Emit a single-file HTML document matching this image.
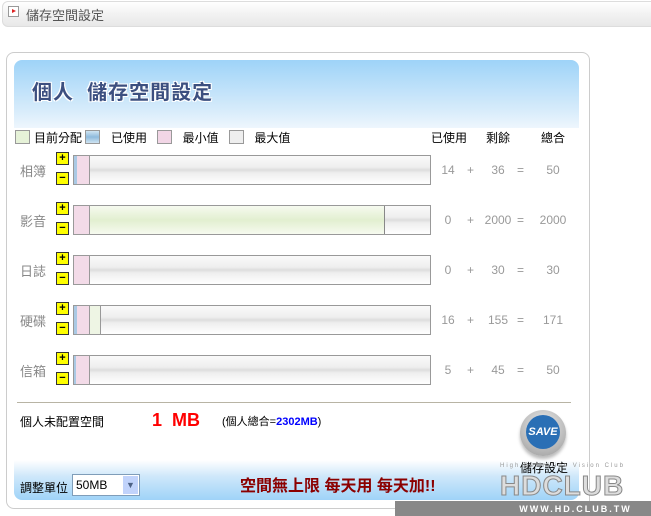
<!DOCTYPE html><html><head><meta charset="utf-8"><style>
body{margin:0;width:651px;height:516px;background:#fff;font-family:"Liberation Sans","Noto Sans CJK TC",sans-serif;position:relative;overflow:hidden;font-size:12px}
.a{position:absolute}
.top{left:2px;top:1px;width:660px;height:24px;border:1px solid #ddd;border-radius:6px;background:linear-gradient(#fff,#f2f2f2 50%,#e8e8e8);}
.bar{position:absolute;left:73px;width:356px;height:28px;border:1px solid #999;background:linear-gradient(#fafafa,#eee 40%,#ddd 50%,#eee 60%,#fff)}
.pl{position:absolute;width:11px;height:11px;background:#ff0;border:1px solid #333;font:bold 11px/10px "Liberation Sans";text-align:center;color:#000}
.n{position:absolute;color:#999;font-size:12px;text-align:center}
.lb{position:absolute;left:20px;color:#888;font-size:13px}
.sw{display:inline-block;width:13px;height:12px;border:1px solid #999;vertical-align:-2px;margin-right:4px}
</style></head><body>
<div class="a top"></div>
<div class="a" style="left:8px;top:6px;width:9px;height:9px;border:1px solid #999;background:#fff"><div style="margin:2px 0 0 3px;width:0;height:0;border-left:4px solid #d22;border-top:2.5px solid transparent;border-bottom:2.5px solid transparent"></div></div>
<div class="a" style="left:26px;top:5px;font-size:13px;color:#555">儲存空間設定</div>
<div class="a" style="left:6px;top:52px;width:582px;height:455px;border:1px solid #ccc;border-radius:8px"></div>
<div class="a" style="left:14px;top:60px;width:565px;height:68px;border-radius:8px 8px 0 0;background:linear-gradient(#9ed3f8,#d8ecfb 75%,#eef6fd)"></div>
<div class="a" style="left:32px;top:76px;font-size:20px;font-weight:bold;color:#3c4f80;text-shadow:1px 1px 0 #fff,-1px -1px 0 #fff,1px -1px 0 #fff,-1px 1px 0 #fff;letter-spacing:1px">個人&nbsp; 儲存空間設定</div>
<div class="a" style="left:15px;top:129px;font-size:12px;color:#000"><span class="sw" style="background:#e6f2d8"></span>目前分配 <span class="sw" style="background:linear-gradient(#cfe4f2,#8fbbdd 50%,#cfe4f2)"></span>&nbsp; 已使用 &nbsp;&nbsp;<span class="sw" style="background:#f2d6e6"></span>&nbsp; 最小值 &nbsp;&nbsp;<span class="sw" style="background:#eee"></span>&nbsp; 最大值</div>
<div class="a" style="left:431px;top:129px">已使用</div><div class="a" style="left:486px;top:129px">剩餘</div><div class="a" style="left:541px;top:129px">總合</div>

<div class="lb" style="top:161px">相簿</div><div class="pl" style="left:56px;top:152px">+</div><div class="pl" style="left:56px;top:172px">−</div>
<div class="bar" style="top:155px"><div class="a" style="left:0;width:3px;height:28px;background:#aac9e4"></div><div class="a" style="left:3px;width:12px;height:28px;background:#f3dbe8;border-right:1px solid #999"></div></div>
<div class="n" style="left:436px;top:163px;width:24px">14</div><div class="n" style="left:467px;top:163px">+</div><div class="n" style="left:486px;top:163px;width:24px">36</div><div class="n" style="left:517px;top:163px">=</div><div class="n" style="left:538px;top:163px;width:30px">50</div>

<div class="lb" style="top:211px">影音</div><div class="pl" style="left:56px;top:202px">+</div><div class="pl" style="left:56px;top:222px">−</div>
<div class="bar" style="top:205px"><div class="a" style="left:0;width:310px;height:28px;background:linear-gradient(#f6faef,#e2efd0 50%,#f6faef);border-right:1px solid #888"></div><div class="a" style="left:0;width:15px;height:28px;background:#f3dbe8;border-right:1px solid #999"></div></div>
<div class="n" style="left:436px;top:213px;width:24px">0</div><div class="n" style="left:467px;top:213px">+</div><div class="n" style="left:482px;top:213px;width:32px">2000</div><div class="n" style="left:517px;top:213px">=</div><div class="n" style="left:536px;top:213px;width:34px">2000</div>

<div class="lb" style="top:261px">日誌</div><div class="pl" style="left:56px;top:252px">+</div><div class="pl" style="left:56px;top:272px">−</div>
<div class="bar" style="top:255px"><div class="a" style="left:0;width:15px;height:28px;background:#f3dbe8;border-right:1px solid #999"></div></div>
<div class="n" style="left:436px;top:263px;width:24px">0</div><div class="n" style="left:467px;top:263px">+</div><div class="n" style="left:486px;top:263px;width:24px">30</div><div class="n" style="left:517px;top:263px">=</div><div class="n" style="left:538px;top:263px;width:30px">30</div>

<div class="lb" style="top:311px">硬碟</div><div class="pl" style="left:56px;top:302px">+</div><div class="pl" style="left:56px;top:322px">−</div>
<div class="bar" style="top:305px"><div class="a" style="left:0;width:26px;height:28px;background:#eef5e4;border-right:1px solid #999"></div><div class="a" style="left:0;width:3px;height:28px;background:#aac9e4"></div><div class="a" style="left:3px;width:12px;height:28px;background:#f3dbe8;border-right:1px solid #999"></div></div>
<div class="n" style="left:436px;top:313px;width:24px">16</div><div class="n" style="left:467px;top:313px">+</div><div class="n" style="left:484px;top:313px;width:28px">155</div><div class="n" style="left:517px;top:313px">=</div><div class="n" style="left:538px;top:313px;width:30px">171</div>

<div class="lb" style="top:361px">信箱</div><div class="pl" style="left:56px;top:352px">+</div><div class="pl" style="left:56px;top:372px">−</div>
<div class="bar" style="top:355px"><div class="a" style="left:0;width:2px;height:28px;background:#aac9e4"></div><div class="a" style="left:2px;width:13px;height:28px;background:#f3dbe8;border-right:1px solid #999"></div></div>
<div class="n" style="left:436px;top:363px;width:24px">5</div><div class="n" style="left:467px;top:363px">+</div><div class="n" style="left:486px;top:363px;width:24px">45</div><div class="n" style="left:517px;top:363px">=</div><div class="n" style="left:538px;top:363px;width:30px">50</div>

<div class="a" style="left:17px;top:402px;width:554px;height:1px;background:#b8b4a4"></div>
<div class="a" style="left:20px;top:413px">個人未配置空間</div>
<div class="a" style="left:152px;top:410px;color:#f00;font-weight:bold;font-size:18px">1&nbsp; MB</div>
<div class="a" style="left:222px;top:413px;font-size:11px">(個人總合=<b style="color:#00f">2302MB</b>)</div>
<div class="a" style="left:14px;top:460px;width:565px;height:40px;border-radius:0 0 8px 8px;background:linear-gradient(#fff,#cfe8fa 40%,#9fd3f8)"></div>
<div class="a" style="left:520px;top:410px;width:46px;height:46px;border-radius:50%;background:radial-gradient(circle at 50% 35%,#eee,#999);box-shadow:0 3px 3px #bbb"></div>
<div class="a" style="left:526px;top:415px;width:34px;height:34px;border-radius:50%;background:#2a6fb5;color:#fff;font:bold italic 11px/34px 'Liberation Sans';text-align:center">SAVE</div>
<div class="a" style="left:520px;top:459px;font-size:12px">儲存設定</div>
<div class="a" style="left:20px;top:479px">調整單位</div>
<div class="a" style="left:72px;top:474px;width:66px;height:20px;border:1px solid #7f9db9;background:#fff;font-size:12px;line-height:20px;text-indent:3px">50MB<div class="a" style="right:1px;top:1px;width:15px;height:18px;background:#c1d3fb;color:#4d6185;font-size:9px;text-align:center;line-height:18px;text-indent:0">▼</div></div>
<div class="a" style="left:240px;top:472px;color:#8b0000;font-weight:bold;font-size:16px">空間無上限 每天用 每天加!!</div>
<div class="a" style="left:500px;top:463px;font-size:6px;color:#999;letter-spacing:2px">High Definition Vision Club</div>
<div class="a" style="left:500px;top:472px;font:bold 28px/28px 'Liberation Sans';color:#ddd;-webkit-text-stroke:1px #888;letter-spacing:1px">HDCLUB</div>
<div class="a" style="left:395px;top:501px;width:256px;height:15px;background:#888"></div>
<div class="a" style="left:500px;top:502px;width:151px;height:14px;color:#fff;font:bold 9px/14px 'Liberation Sans';text-align:center;letter-spacing:2px">WWW.HD.CLUB.TW</div>
</body></html>
